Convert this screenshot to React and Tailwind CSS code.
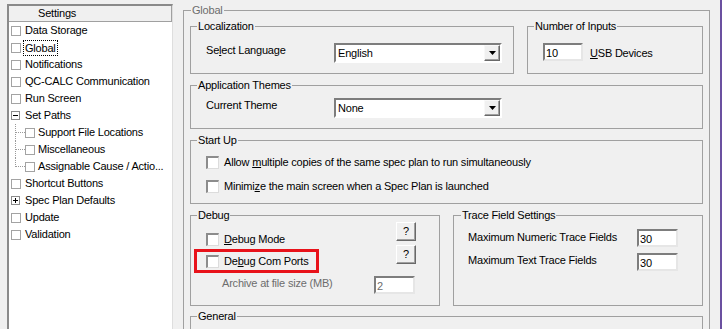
import clsx from 'clsx';

const treeItems = [
  { label: 'Data Storage' },
  { label: 'Global', focus: true },
  { label: 'Notifications' },
  { label: 'QC-CALC Communication' },
  { label: 'Run Screen' },
  {
    label: 'Set Paths',
    expander: 'minus',
    children: ['Support File Locations', 'Miscellaneous', 'Assignable Cause / Actio...'],
  },
  { label: 'Shortcut Buttons' },
  { label: 'Spec Plan Defaults', expander: 'plus' },
  { label: 'Update' },
  { label: 'Validation' },
];

function TreeBox({ expander }) {
  if (expander) {
    return (
      <span className="w-[9px] h-[9px] border border-[#8c8c8c] bg-white flex items-center justify-center">
        <span className="relative w-[5px] h-[1px] bg-black">
          {expander === 'plus' && <span className="absolute left-[2px] -top-[2px] w-[1px] h-[5px] bg-black" />}
        </span>
      </span>
    );
  }
  return <span className="w-[10px] h-[10px] border border-[#a3a3a3] bg-white" />;
}

function Tree() {
  return (
    <div className="w-[166px] flex flex-col border-l-2 border-t-2 border-l-[#8a8a8a] border-t-[#8a8a8a] border-r border-r-[#dedede] bg-white">
      <div className="h-[16px] flex items-center pl-[29px] bg-[#f0f0f0] border-b border-r border-[#a0a0a0]">Settings</div>
      <div>
        {treeItems.map((item) => (
          <div key={item.label}>
            <div className="h-[17px] flex items-center pl-[2px]">
              <TreeBox expander={item.expander} />
              <span
                className={clsx(
                  item.expander ? 'ml-[5px]' : 'ml-[4px]',
                  item.focus && 'outline outline-1 outline-dotted outline-black px-[1px] leading-[14px]'
                )}
                style={item.focus ? { marginLeft: 3 } : undefined}
              >
                {item.label}
              </span>
            </div>
            {item.children &&
              item.children.map((child, i) => {
                const last = i === item.children.length - 1;
                return (
                  <div key={child} className="h-[17px] flex items-stretch pl-[6px]">
                    {last ? (
                      <span className="w-[10px] h-[9px] border-l border-b border-dotted border-[#9a9a9a]" />
                    ) : (
                      <span className="w-[10px] border-l border-dotted border-[#9a9a9a]">
                        <span className="block h-[9px] border-b border-dotted border-[#9a9a9a]" />
                      </span>
                    )}
                    <span className="flex items-center">
                      <TreeBox />
                      <span className="ml-[3px]">{child}</span>
                    </span>
                  </div>
                );
              })}
          </div>
        ))}
      </div>
    </div>
  );
}

function Group({ title, className, inner, legendClass, children }) {
  return (
    <fieldset className={clsx('border border-[#a0a0a0] min-w-0 m-0 p-0', className)}>
      <legend className={clsx('ml-[6px] px-[1px] leading-[14px]', legendClass)}>{title}</legend>
      <div className={inner}>{children}</div>
    </fieldset>
  );
}

function Dropdown({ value }) {
  return (
    <div className="w-[168px] h-[20px] flex border-2 border-t-[#7d7d7d] border-l-[#7d7d7d] border-r-white border-b-white bg-white">
      <span className="flex-1 pl-[2px] leading-[16px]">{value}</span>
      <span className="w-[16px] h-[16px] flex items-center justify-center bg-[#f0f0f0] border border-t-[#f8f8f8] border-l-[#f8f8f8] border-r-[#696969] border-b-[#696969] shadow-[inset_-1px_-1px_0_#a0a0a0]">
        <svg width="7" height="4" viewBox="0 0 7 4">
          <polygon points="0,0 7,0 3.5,4" fill="#000" />
        </svg>
      </span>
    </div>
  );
}

function TextBox({ value, className, disabled }) {
  return (
    <div
      className={clsx(
        'h-[18px] border-2 border-t-[#7d7d7d] border-l-[#7d7d7d] border-r-[#e6e6e6] border-b-[#e6e6e6] bg-white pl-[1px] leading-[14px] pt-[1px]',
        disabled && 'text-[#6d6d6d]',
        className
      )}
    >
      {value}
    </div>
  );
}

function CheckRow({ children }) {
  return (
    <div className="h-[16px] flex items-center">
      <span className="w-[13px] h-[13px] border-t-2 border-l-2 border-r border-b border-t-[#8c8c8c] border-l-[#8c8c8c] border-r-[#dcdcdc] border-b-[#dcdcdc] bg-white" />
      <span className="ml-[5px]">{children}</span>
    </div>
  );
}

function HelpButton() {
  return (
    <div className="w-[20px] h-[19px] flex items-center justify-center bg-[#f0f0f0] border border-t-white border-l-white border-r-[#696969] border-b-[#696969] shadow-[inset_-1px_-1px_0_#a0a0a0]">
      ?
    </div>
  );
}

export default function App() {
  return (
    <div className="w-[722px] h-[329px] overflow-hidden bg-[#f0f0f0] flex border-r-2 border-[#6b50a0] text-[11px] tracking-[-0.2px] text-black font-['Liberation_Sans',Arial,sans-serif]">
      <div className="pt-[4px] pl-[7px] flex">
        <Tree />
      </div>
      <div className="ml-[10px] pt-[3px]">
        <Group
          title="Global"
          className="w-[527px]"
          legendClass="ml-[7px] text-[#6d6d6d]"
          inner="pt-[2px] px-[6px] flex flex-col"
        >
          <div className="flex gap-[13px]">
            <Group title="Localization" className="w-[324px]" inner="pl-[15px] pt-[10px] pb-[10px] flex">
              <span className="w-[128px] leading-[14px]">
                Se<u>l</u>ect Language
              </span>
              <Dropdown value="English" />
            </Group>
            <Group title="Number of Inputs" className="flex-1" inner="pl-[15px] pt-[10px] flex items-start">
              <TextBox value="10" className="w-[40px]" />
              <span className="ml-[7px] mt-[3px] leading-[14px]">
                <u>U</u>SB Devices
              </span>
            </Group>
          </div>

          <Group title="Application Themes" className="mt-[4px]" inner="pl-[15px] pt-[6px] pb-[10px] flex">
            <span className="w-[128px] leading-[14px]">Current Theme</span>
            <Dropdown value="None" />
          </Group>

          <Group title="Start Up" className="mt-[4px]" inner="pl-[15px] pt-[7px] pb-[9px] flex flex-col gap-[8px]">
            <CheckRow>
              Allow <u>m</u>ultiple copies of the same spec plan to run simultaneously
            </CheckRow>
            <CheckRow>
              Minimi<u>z</u>e the main screen when a Spec Plan is launched
            </CheckRow>
          </Group>

          <div className="mt-[4px] flex gap-[13px]">
            <Group title="Debug" className="w-[250px]" inner="flex justify-between pl-[3px] pr-[23px] pb-[11px]">
              <div className="flex flex-col">
                <div className="mt-[9px] ml-[12px]">
                  <CheckRow>
                    <u>D</u>ebug Mode
                  </CheckRow>
                </div>
                <div className="mt-[2px] w-[125px] h-[24px] border-[3px] border-[#e8121a] pl-[9px] pt-[1px]">
                  <CheckRow>
                    De<u>b</u>ug Com Ports
                  </CheckRow>
                </div>
                <span className="mt-[3px] ml-[28px] leading-[14px] text-[#6d6d6d]">Archive at file size (MB)</span>
              </div>
              <div className="flex flex-col items-end">
                <HelpButton />
                <div className="mt-[4px]">
                  <HelpButton />
                </div>
                <TextBox value="2" disabled className="w-[41px] mt-[12px] mr-[1px]" />
              </div>
            </Group>
            <Group title="Trace Field Settings" className="flex-1" legendClass="ml-[7px]" inner="pl-[14px] pt-[7px] flex flex-col gap-[6px]">
              <div className="flex items-start">
                <span className="w-[169px] leading-[14px] mt-[1px]">Maximum Numeric Trace Fields</span>
                <TextBox value="30" className="w-[41px]" />
              </div>
              <div className="flex items-start">
                <span className="w-[169px] leading-[14px]">Maximum Text Trace Fields</span>
                <TextBox value="30" className="w-[41px]" />
              </div>
            </Group>
          </div>

          <Group title="General" className="mt-[3px]" inner="h-[40px]" />
        </Group>
      </div>
    </div>
  );
}
